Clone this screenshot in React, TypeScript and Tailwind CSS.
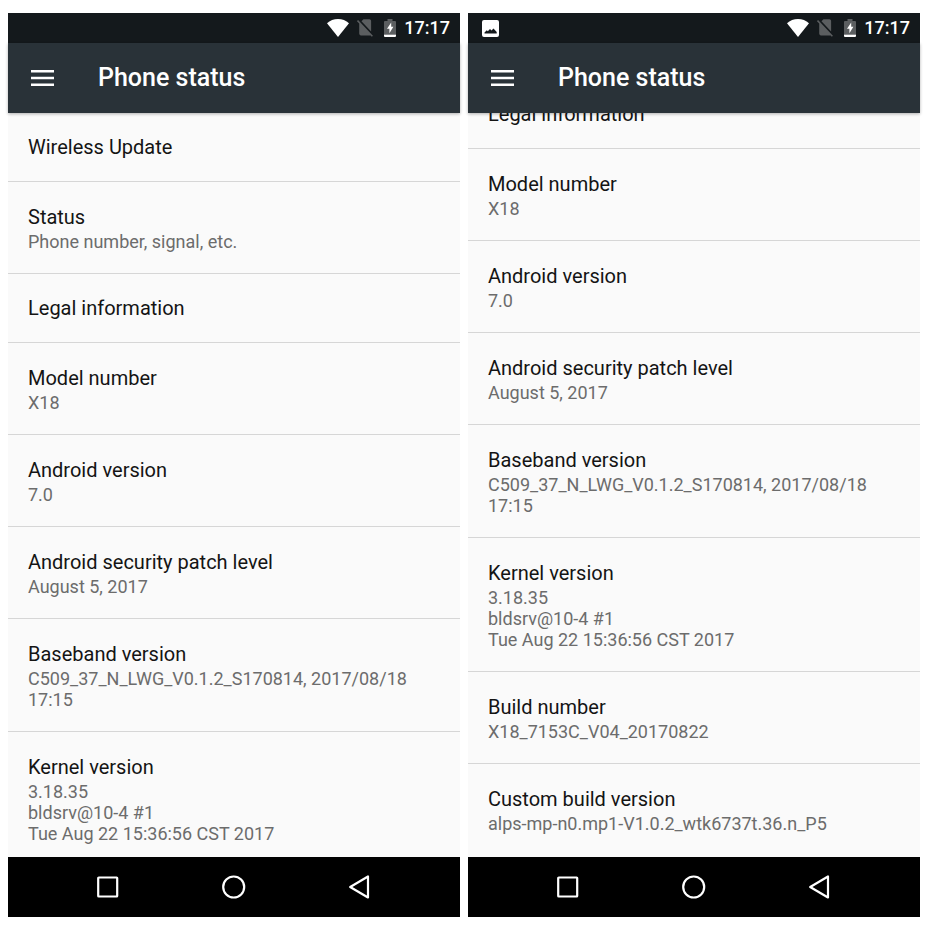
import React from 'react';

interface StatusItem {
  title: string;
  summary?: string[];
}

const WIRELESS: StatusItem = { title: 'Wireless Update' };
const STATUS: StatusItem = { title: 'Status', summary: ['Phone number, signal, etc.'] };

const COMMON_ITEMS: StatusItem[] = [
  { title: 'Legal information' },
  { title: 'Model number', summary: ['X18'] },
  { title: 'Android version', summary: ['7.0'] },
  { title: 'Android security patch level', summary: ['August 5, 2017'] },
  { title: 'Baseband version', summary: ['C509_37_N_LWG_V0.1.2_S170814, 2017/08/18 17:15'] },
  { title: 'Kernel version', summary: ['3.18.35', 'bldsrv@10-4 #1', 'Tue Aug 22 15:36:56 CST 2017'] },
];

const BUILD_ITEMS: StatusItem[] = [
  { title: 'Build number', summary: ['X18_7153C_V04_20170822'] },
  { title: 'Custom build version', summary: ['alps-mp-n0.mp1-V1.0.2_wtk6737t.36.n_P5'] },
];

const StatusBar: React.FC<{ hasScreenshot?: boolean }> = ({ hasScreenshot }) => (
  <div className="h-[30px] shrink-0 flex items-center justify-between bg-[#14191c] pl-3.5 pr-2.5">
    <div>
      {hasScreenshot && (
        <svg width="17" height="17" viewBox="0 0 17 17" aria-hidden="true">
          <path
            fill="#fff"
            fillRule="evenodd"
            d="M2 0h13a2 2 0 0 1 2 2v13a2 2 0 0 1-2 2H2a2 2 0 0 1-2-2V2a2 2 0 0 1 2-2zM2.500 13.500h12.200v-1.500l-3.200-3.500-2 2-1.500-1.500-2.200 2.200-1-.9-2.300 2.200z"
          />
        </svg>
      )}
    </div>
    <div className="flex items-center">
      <svg width="22" height="18" viewBox="0 0 22 18" className="mr-2" aria-hidden="true">
        <path fill="#fff" d="M11 18 0 4.200C3 1.500 6.800 0 11 0s8 1.500 11 4.200z" />
      </svg>
      <svg width="16" height="18" viewBox="2.4 2.800 18.800 20" preserveAspectRatio="none" className="mr-[11px]" aria-hidden="true">
        <path
          fill="#5b5e60"
          d="M18.990 5c0-1.100-.89-2-1.990-2h-7L7.660 5.340 19 16.680 18.990 5zM3.650 3.880L2.380 5.150 5 7.770V19c0 1.100.9 2 2 2h10.010c.35 0 .67-.1.96-.26l1.880 1.880 1.270-1.270L3.650 3.880z"
        />
      </svg>
      <svg width="12" height="18" viewBox="0 0 12 18" className="mr-2" aria-hidden="true">
        <path fill="#5b5e60" d="M3.500 0h5v2H11a1 1 0 0 1 1 1v12H0V3a1 1 0 0 1 1-1h2.500z" />
        <path fill="#fff" d="M0 15.500h12V17a1 1 0 0 1-1 1H1a1 1 0 0 1-1-1zM7.200 3.500 3 9.800h2.400v4.400L9.400 7.800H7.200z" />
      </svg>
      <span className="text-lg leading-none font-medium text-white">17:17</span>
    </div>
  </div>
);

const NavBar: React.FC = () => (
  <nav className="h-[60px] shrink-0 flex items-center justify-center bg-black">
    <button type="button" aria-label="Recent apps" className="w-[28%] flex justify-center">
      <svg width="24" height="24" viewBox="0 0 24 24" fill="none" stroke="#fff" strokeWidth="2.200">
        <rect x="3.200" y="2.500" width="19" height="19" rx=".6" />
      </svg>
    </button>
    <button type="button" aria-label="Home" className="w-[28%] flex justify-center">
      <svg width="24" height="24" viewBox="0 0 24 24" fill="none" stroke="#fff" strokeWidth="2.200">
        <circle cx="11.700" cy="12" r="10.500" />
      </svg>
    </button>
    <button type="button" aria-label="Back" className="w-[28%] flex justify-center">
      <svg width="24" height="24" viewBox="0 0 24 24" fill="none" stroke="#fff" strokeWidth="2.200" strokeLinejoin="round">
        <path d="M19 1.500v21L1.200 12z" />
      </svg>
    </button>
  </nav>
);

const StatusRow: React.FC<{ item: StatusItem }> = ({ item }) => (
  <li className="shrink-0 border-b border-[#d6d6d6] last:border-b-0">
    <button type="button" className={`block w-full px-5 text-left ${item.summary ? 'py-[21px]' : 'py-5'}`}>
      <span className="block text-xl leading-7 text-[#141414]">{item.title}</span>
      {item.summary?.map((line) => (
        <span key={line} className="block text-lg leading-[21px] text-[#6c6c6c]">{line}</span>
      ))}
    </button>
  </li>
);

interface PhoneProps {
  items: StatusItem[];
  scrolledToEnd?: boolean;
}

const Phone: React.FC<PhoneProps> = ({ items, scrolledToEnd }) => (
  <section className="flex-1 min-w-0 flex flex-col bg-[#fafafa]">
    <StatusBar hasScreenshot={scrolledToEnd} />
    <header className="relative h-[70px] shrink-0 flex items-center gap-11 bg-[#293238] pl-[23px] shadow-[0_1px_3px_rgba(0,0,0,0.3)]">
      <button type="button" aria-label="Open menu">
        <svg width="23" height="16" viewBox="0 0 23 16" fill="#fff">
          <path d="M0 0h23v2.600H0zM0 6.700h23v2.600H0zM0 13.400h23V16H0z" />
        </svg>
      </button>
      <h1 className="text-[25px] leading-8 font-medium text-white">Phone status</h1>
    </header>
    <ul className={`flex-1 min-h-0 flex flex-col overflow-hidden ${scrolledToEnd ? 'justify-end pb-0.5' : ''}`}>
      {items.map((item) => (
        <StatusRow key={item.title} item={item} />
      ))}
    </ul>
    <NavBar />
  </section>
);

const App: React.FC = () => (
  <main className="h-screen flex gap-2 bg-white pl-2 pr-2.5 py-[13px] font-['Roboto',sans-serif]">
    <Phone items={[WIRELESS, STATUS, ...COMMON_ITEMS]} />
    <Phone items={[...COMMON_ITEMS, ...BUILD_ITEMS]} scrolledToEnd />
  </main>
);

export default App;
